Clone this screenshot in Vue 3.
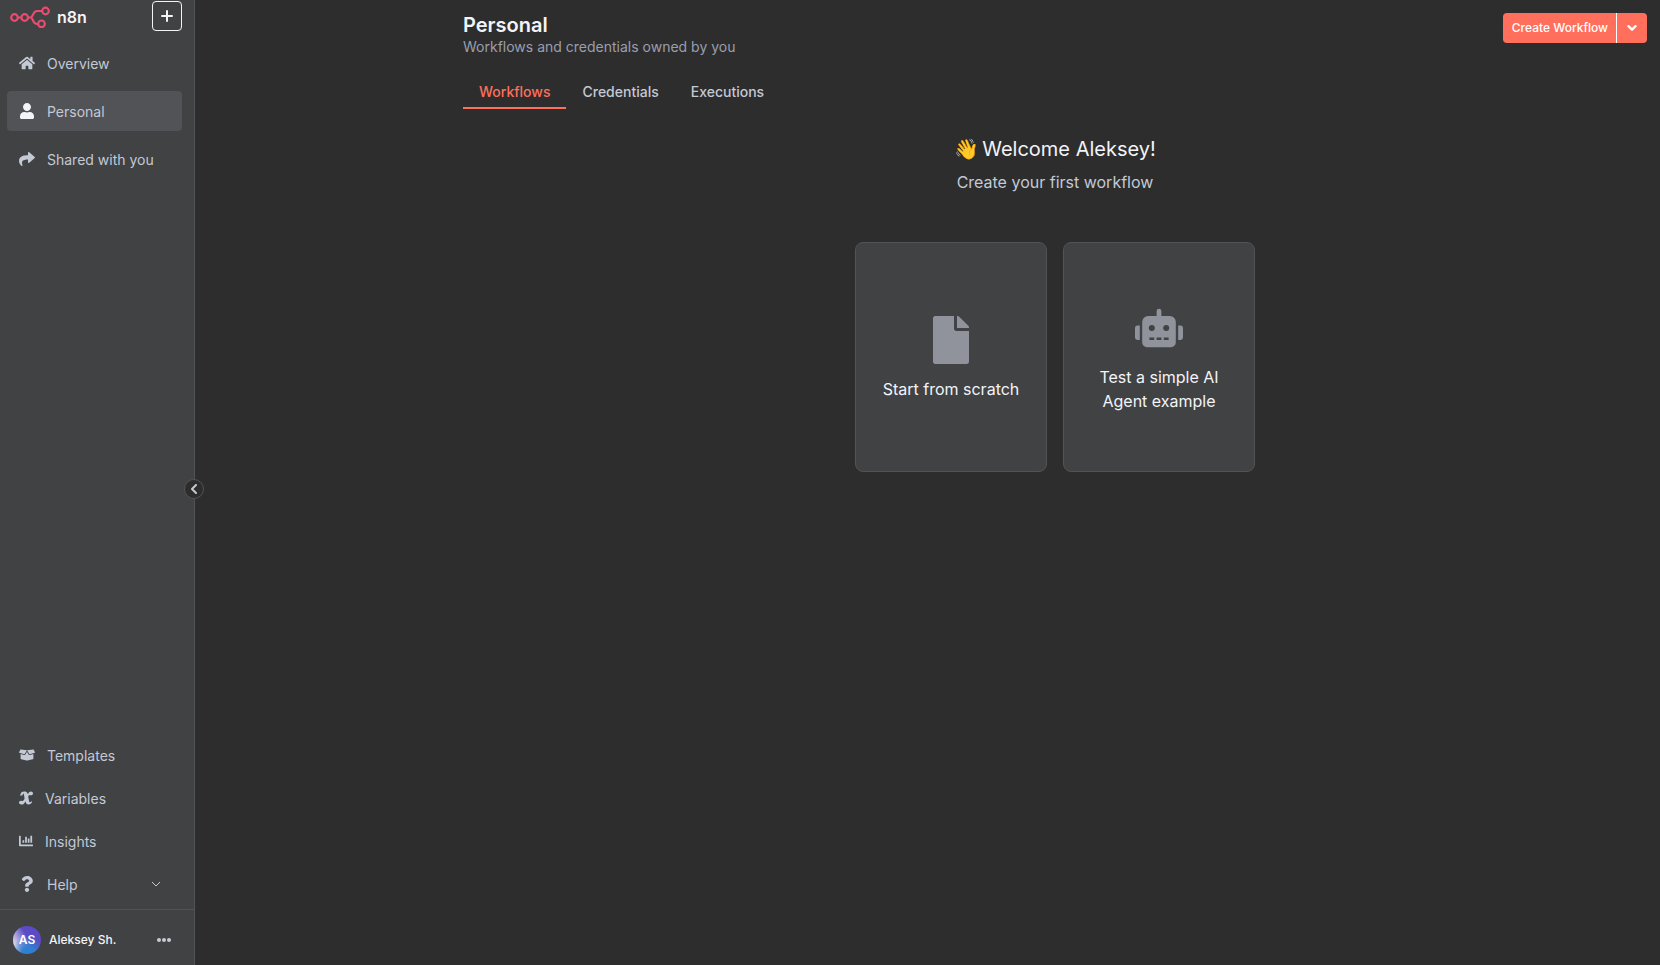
<script setup>
import { ref } from 'vue'

const icons = {
  home: {
    box: '0 0 576 512',
    d: 'M280.37 148.26L96 300.11V464a16 16 0 0 0 16 16l112.06-.29a16 16 0 0 0 15.92-16V368a16 16 0 0 1 16-16h64a16 16 0 0 1 16 16v95.64a16 16 0 0 0 16 16.05L464 480a16 16 0 0 0 16-16V300L295.67 148.26a12.19 12.19 0 0 0-15.3 0zM571.6 251.47L488 182.56V44.05a12 12 0 0 0-12-12h-56a12 12 0 0 0-12 12v72.61L318.47 43a48 48 0 0 0-61 0L4.34 251.47a12 12 0 0 0-1.6 16.9l25.5 31A12 12 0 0 0 45.15 301l235.22-193.74a12.19 12.19 0 0 1 15.3 0L530.9 301a12 12 0 0 0 16.9-1.6l25.5-31a12 12 0 0 0-1.7-16.93z',
  },
  user: {
    box: '0 0 448 512',
    d: 'M224 256c70.7 0 128-57.3 128-128S294.7 0 224 0 96 57.3 96 128s57.3 128 128 128zm89.6 32h-16.7c-22.2 10.2-46.9 16-72.9 16s-50.6-5.8-72.9-16h-16.7C60.2 288 0 348.2 0 422.4V464c0 26.5 21.5 48 48 48h352c26.5 0 48-21.5 48-48v-41.6c0-74.2-60.2-134.4-134.4-134.4z',
  },
  share: {
    box: '0 0 512 512',
    d: 'M503.691 189.836L327.687 37.851C312.281 24.546 288 35.347 288 56.015v80.053C127.371 137.907 0 170.1 0 322.326c0 61.441 39.581 122.309 83.333 154.132 13.653 9.931 33.111-2.533 28.077-18.631C66.066 312.814 132.917 274.316 288 272.085V360c0 20.7 24.3 31.453 39.687 18.164l176.004-152c11.071-9.562 11.086-26.753 0-36.328z',
  },
  box: {
    box: '0 0 640 512',
    d: 'M425.7 256c-16.9 0-32.8-9-41.4-23.4L320 126l-64.2 106.6c-8.7 14.5-24.6 23.5-41.5 23.5-4.5 0-9-.6-13.3-1.9L64 215v178c0 14.7 10 27.5 24.2 31l216.2 54.1c10.2 2.5 20.9 2.5 31 0L551.8 424c14.2-3.6 24.2-16.4 24.2-31V215l-137 39.1c-4.3 1.3-8.8 1.9-13.3 1.9zm212.6-112.2L586.8 41c-3.1-6.2-9.8-9.8-16.7-8.9L320 64l91.7 152.1c3.8 6.3 11.4 9.3 18.5 7.3l197.9-56.5c9.9-2.9 14.7-13.9 10.2-23.1zM53.2 41L1.7 143.8c-4.6 9.2.3 20.2 10.1 23l197.9 56.5c7.1 2 14.7-1 18.5-7.3L320 64 69.8 32.1c-6.9-.8-13.5 2.7-16.6 8.9z',
  },
  variable: {
    box: '0 0 14 14',
    d: 'M2.2 1.5C3.400.6 5.600.3 7 .8c1 .4 1.500 1.300 1.800 2.400C9.600 1.700 10.600.5 12 .5c1.200 0 2 .8 2 1.900s-.8 1.900-1.900 1.900c-.7 0-1-.4-1.500-.4-.6 0-1 .8-1.400 1.800l.9 4.200c.2 1 .5 1.400.9 1.400.5 0 .9-.5 1.300-1.100l.9.5c-.8 1.700-1.900 2.800-3.600 2.800-1.900 0-2.600-1.100-3-2.800l-.1-.5c-.9 1.900-2 3.400-4.200 3.400-1.300 0-2.300-.8-2.300-2 0-1.100.8-1.900 1.900-1.900.8 0 1.100.4 1.600.4.8 0 1.500-1.100 2.100-2.500L5 3.900C4.800 2.900 4.600 2.400 4.200 2.400L3.300 4.500 1 4.600z',
  },
  chart: {
    box: '0 0 512 512',
    d: 'M332.8 320h38.4c6.4 0 12.8-6.4 12.8-12.8V172.8c0-6.4-6.4-12.8-12.8-12.8h-38.4c-6.4 0-12.8 6.4-12.8 12.8v134.4c0 6.4 6.4 12.8 12.8 12.8zm96 0h38.4c6.4 0 12.8-6.4 12.8-12.8V76.8c0-6.4-6.4-12.8-12.8-12.8h-38.4c-6.4 0-12.8 6.4-12.8 12.8v230.4c0 6.4 6.4 12.8 12.8 12.8zm-288 0h38.4c6.4 0 12.8-6.4 12.8-12.8v-70.4c0-6.4-6.4-12.8-12.8-12.8h-38.4c-6.4 0-12.8 6.4-12.8 12.8v70.4c0 6.4 6.4 12.8 12.8 12.8zm96 0h38.4c6.4 0 12.8-6.4 12.8-12.8V108.8c0-6.4-6.4-12.8-12.8-12.8h-38.4c-6.4 0-12.8 6.4-12.8 12.8v198.4c0 6.4 6.4 12.8 12.8 12.8zM496 384H64V80c0-8.84-7.16-16-16-16H16C7.16 64 0 71.16 0 80v336c0 17.67 14.33 32 32 32h464c8.84 0 16-7.16 16-16v-32c0-8.84-7.16-16-16-16z',
  },
  question: {
    box: '0 0 384 512',
    d: 'M202.021 0C122.202 0 70.503 32.703 29.914 91.026c-7.363 10.58-5.093 25.086 5.178 32.874l43.138 32.709c10.373 7.865 25.132 6.026 33.253-4.148 25.049-31.381 43.63-49.449 82.757-49.449 30.764 0 68.816 19.799 68.816 49.631 0 22.552-18.617 34.134-48.993 51.164-35.423 19.86-82.299 44.576-82.299 106.405V320c0 13.255 10.745 24 24 24h72.471c13.255 0 24-10.745 24-24v-5.773c0-42.86 125.268-44.645 125.268-160.627C377.504 66.256 286.902 0 202.021 0zM192 373.459c-38.196 0-69.271 31.075-69.271 69.271 0 38.195 31.075 69.27 69.271 69.27s69.271-31.075 69.271-69.271-31.075-69.27-69.271-69.27z',
  },
  file: {
    box: '0 0 384 512',
    d: 'M224 136V0H24C10.7 0 0 10.7 0 24v464c0 13.3 10.7 24 24 24h336c13.3 0 24-10.7 24-24V160H248c-13.2 0-24-10.8-24-24zm160-14.1v6.1H256V0h6.1c6.4 0 12.5 2.5 17 7l97.9 98c4.5 4.5 7 10.6 7 16.9z',
  },
  robot: {
    box: '0 0 640 512',
    d: 'M32,224H64V416H32A31.96166,31.96166,0,0,1,0,384V256A31.96166,31.96166,0,0,1,32,224Zm512-48V448a64.06328,64.06328,0,0,1-64,64H160a64.06328,64.06328,0,0,1-64-64V176a79.974,79.974,0,0,1,80-80H288V32a32,32,0,0,1,64,0V96H464A79.974,79.974,0,0,1,544,176ZM264,256a40,40,0,1,0-40,40A39.997,39.997,0,0,0,264,256Zm-8,128H192v32h64Zm96,0H288v32h64ZM456,256a40,40,0,1,0-40,40A39.997,39.997,0,0,0,456,256Zm-8,128H384v32h64ZM640,256V384a31.96166,31.96166,0,0,1-32,32H576V224h32A31.96166,31.96166,0,0,1,640,256Z',
  },
}

const topNav = [
  { label: 'Overview', icon: 'home' },
  { label: 'Personal', icon: 'user' },
  { label: 'Shared with you', icon: 'share' },
]
const bottomNav = [
  { label: 'Templates', icon: 'box' },
  { label: 'Variables', icon: 'variable', small: true },
  { label: 'Insights', icon: 'chart', small: true },
  { label: 'Help', icon: 'question', expandable: true },
]
const tabs = ['Workflows', 'Credentials', 'Executions']
const cards = [
  { label: 'Start from scratch', icon: 'file' },
  { label: 'Test a simple AI Agent example', icon: 'robot' },
]
const activeNav = ref('Personal')
const activeTab = ref('Workflows')
</script>

<template>
  <div class="app">
    <aside class="sidebar">
      <header class="brand">
        <a href="#" class="logo" aria-label="n8n home">
          <svg class="logo-mark" viewBox="0 0 40 22" fill="none" stroke="#ea4b71" stroke-width="2.2">
            <circle cx="4.5" cy="11.5" r="3.3" />
            <circle cx="14.7" cy="11.5" r="3.3" />
            <circle cx="35.5" cy="5" r="3.3" />
            <circle cx="31.5" cy="17.8" r="3.3" />
            <path d="M7.8 11.5h3.6M18 11.5h2.4c3.2 0 2-6.500 6.600-6.500h5.200M20.400 11.500c3.200 0 2 6.300 6 6.300h1.800" />
          </svg>
          <span class="logo-text">n8n</span>
        </a>
        <button class="add" type="button" aria-label="Add">
          <svg viewBox="0 0 12 12" stroke="currentColor" stroke-width="2" stroke-linecap="round"><path d="M6 1v10M1 6h10" /></svg>
        </button>
      </header>

      <nav class="nav nav-top">
        <a
          v-for="item in topNav"
          :key="item.label"
          href="#"
          class="nav-item"
          :class="{ active: item.label === activeNav }"
          @click.prevent="activeNav = item.label"
        >
          <svg class="nav-icon" :viewBox="icons[item.icon].box"><path :d="icons[item.icon].d" /></svg>
          <span>{{ item.label }}</span>
        </a>
      </nav>

      <nav class="nav nav-bottom">
        <a v-for="item in bottomNav" :key="item.label" href="#" class="nav-item" @click.prevent>
          <svg class="nav-icon" :class="{ small: item.small }" :viewBox="icons[item.icon].box"><path :d="icons[item.icon].d" /></svg>
          <span>{{ item.label }}</span>
          <svg v-if="item.expandable" class="expand" viewBox="0 0 10 6" fill="none" stroke="currentColor"><path d="M1 1l4 4 4-4" /></svg>
        </a>
      </nav>

      <footer class="account">
        <span class="avatar">AS</span>
        <span class="account-name">Aleksey Sh.</span>
        <button class="more" type="button" aria-label="Account menu">
          <svg viewBox="0 0 14 4" fill="currentColor"><circle cx="2" cy="2" r="2" /><circle cx="7" cy="2" r="2" /><circle cx="12" cy="2" r="2" /></svg>
        </button>
      </footer>

      <button class="collapse" type="button" aria-label="Collapse sidebar">
        <svg viewBox="0 0 6 10" fill="none" stroke="currentColor" stroke-width="2" stroke-linecap="round" stroke-linejoin="round"><path d="M5 1L1 5l4 4" /></svg>
      </button>
    </aside>

    <main class="main">
      <div class="content">
        <header class="page-head">
          <div>
            <h1>Personal</h1>
            <p class="subtitle">Workflows and credentials owned by you</p>
          </div>
          <div class="split">
            <button class="create" type="button">Create Workflow</button>
            <button class="create-more" type="button" aria-label="More create options">
              <svg viewBox="0 0 10 6" fill="none" stroke="currentColor" stroke-width="2" stroke-linecap="round" stroke-linejoin="round"><path d="M2 1l3 3 3-3" /></svg>
            </button>
          </div>
        </header>

        <div class="tabs" role="tablist">
          <button
            v-for="tab in tabs"
            :key="tab"
            type="button"
            role="tab"
            class="tab"
            :class="{ active: tab === activeTab }"
            :aria-selected="tab === activeTab"
            @click="activeTab = tab"
          >{{ tab }}</button>
        </div>

        <section class="welcome">
          <h2><span>👋</span><span>Welcome Aleksey!</span></h2>
          <p>Create your first workflow</p>
          <div class="cards">
            <button v-for="card in cards" :key="card.label" type="button" class="card">
              <svg class="card-icon" :viewBox="icons[card.icon].box"><path :d="icons[card.icon].d" /></svg>
              <span>{{ card.label }}</span>
            </button>
          </div>
        </section>
      </div>
    </main>
  </div>
</template>

<style>
body {
  background: #2d2d2d;
}
</style>

<style scoped>
.app {
  display: flex;
  min-height: 100vh;
  font-family: Inter, "Liberation Sans", sans-serif;
  font-size: 14px;
  color: #c3c9d5;
}
.app * {
  box-sizing: border-box;
}
button {
  font: inherit;
  color: inherit;
  padding: 0;
  border: 0;
  background: none;
  cursor: pointer;
}
a {
  color: inherit;
  text-decoration: none;
}
h1,
h2,
p {
  margin: 0;
}
svg {
  display: block;
}

.sidebar {
  position: relative;
  flex: none;
  display: flex;
  flex-direction: column;
  width: 195px;
  background: #414244;
  border-right: 1px solid #525356;
}
.brand {
  display: flex;
  justify-content: space-between;
  padding: 1px 12px 0 10px;
}
.logo {
  display: flex;
  align-items: center;
  gap: 7px;
  height: 31px;
}
.logo-mark {
  width: 40px;
  height: 22px;
}
.logo-text {
  font-size: 16px;
  font-weight: 600;
  color: #f2f4f8;
}
.add {
  display: grid;
  place-items: center;
  width: 30px;
  height: 30px;
  border: 1px solid #f2f4f8;
  border-radius: 4px;
  color: #f2f4f8;
}
.add svg {
  width: 12px;
  height: 12px;
}

.nav {
  display: flex;
  flex-direction: column;
  padding: 0 12px 0 7px;
}
.nav-top {
  gap: 8px;
  padding-top: 11px;
}
.nav-bottom {
  gap: 3px;
  margin-top: auto;
  padding-bottom: 5px;
}
.nav-item {
  display: flex;
  align-items: center;
  gap: 12px;
  height: 40px;
  padding: 0 21px 0 12px;
  border-radius: 4px;
}
.nav-item.active {
  background: #525356;
}
.nav-icon {
  width: 16px;
  height: 16px;
  fill: currentColor;
}
.nav-icon.small {
  width: 14px;
  height: 14px;
}
.nav-item.active .nav-icon {
  color: #f2f4f8;
}
.expand {
  width: 10px;
  height: 6px;
  margin-left: auto;
}

.account {
  display: flex;
  align-items: center;
  height: 56px;
  padding: 4px 23px 0 13px;
  border-top: 1px solid #525356;
}
.avatar {
  display: grid;
  place-items: center;
  width: 28px;
  height: 28px;
  border-radius: 50%;
  background:
    radial-gradient(circle at 55% 100%, #2f80d0 0, #2f80d0 20%, transparent 55%),
    linear-gradient(60deg, #e4e6f2 12%, #5b4bc4 55%);
  font-size: 12px;
  font-weight: 600;
  color: #fff;
}
.account-name {
  margin-left: 8px;
  font-size: 12px;
  font-weight: 500;
  color: #f2f4f8;
}
.more {
  margin-left: auto;
  padding: 4px 0;
}
.more svg {
  width: 14px;
  height: 4px;
}
.collapse {
  position: absolute;
  bottom: calc(50% - 16px);
  right: -10px;
  display: grid;
  place-items: center;
  width: 20px;
  height: 20px;
  border: 1px solid #525356;
  border-radius: 50%;
  background: #2d2d2d;
}
.collapse svg {
  width: 6px;
  height: 10px;
}

.main {
  flex: 1;
  min-width: 0;
  padding: 13px;
}
.content {
  max-width: 1184px;
  margin-left: auto;
}
.page-head {
  display: flex;
  justify-content: space-between;
  align-items: flex-start;
}
h1 {
  font-size: 20px;
  font-weight: 600;
  line-height: 24px;
  color: #f2f4f8;
}
.subtitle {
  line-height: 20px;
  color: #9a9fad;
}
.split {
  display: flex;
  height: 30px;
  border-radius: 4px;
  overflow: hidden;
  color: #fff;
}
.create,
.create-more {
  background: #ff6f5c;
}
.create {
  padding: 0 8px 1px 9px;
  font-size: 12px;
  font-weight: 500;
}
.create-more {
  display: grid;
  place-items: center;
  width: 31px;
  border-left: 1px solid #fff;
}
.create-more svg {
  width: 12px;
  height: 7px;
}

.tabs {
  display: flex;
  margin-top: 19px;
}
.tab {
  height: 33px;
  padding: 0 16px;
  border-bottom: 2px solid transparent;
  font-weight: 500;
}
.tab.active {
  border-color: #ff6f5c;
  color: #ff6f5c;
}

.welcome {
  display: flex;
  flex-direction: column;
  align-items: center;
  padding-top: 27px;
  font-size: 16px;
  line-height: 24px;
}
h2 {
  display: flex;
  gap: 3px;
  font-size: 20px;
  font-weight: 400;
  line-height: 26px;
  color: #f2f4f8;
}
.welcome p {
  margin-top: 8px;
}
.cards {
  display: flex;
  gap: 16px;
  margin-top: 48px;
}
.card {
  display: flex;
  flex-direction: column;
  align-items: center;
  justify-content: center;
  gap: 13px;
  width: 192px;
  height: 230px;
  padding: 2px 24px 0;
  border: 1px solid #525356;
  border-radius: 8px;
  background: #414244;
  color: #f2f4f8;
}
.card-icon {
  width: 48px;
  height: 48px;
  fill: #90939c;
}
</style>
